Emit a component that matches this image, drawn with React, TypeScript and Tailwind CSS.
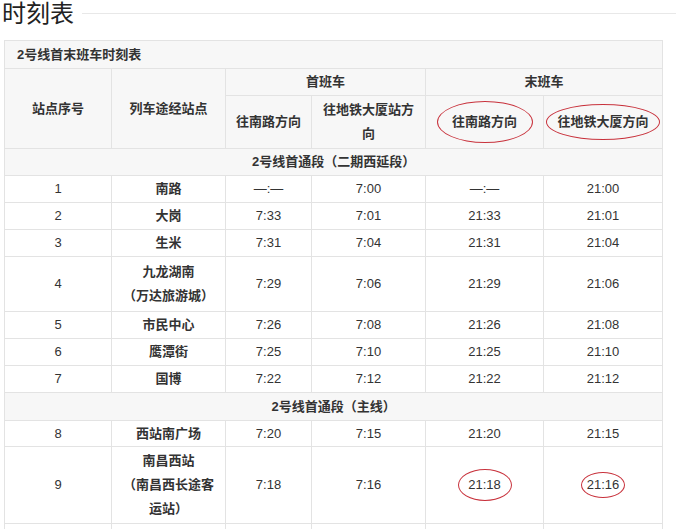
import React from "react";

const B = "border border-[#e3e3e3]";
const rows1 = [
  ["1", "南路", "—:—", "7:00", "—:—", "21:00"],
  ["2", "大岗", "7:33", "7:01", "21:33", "21:01"],
  ["3", "生米", "7:31", "7:04", "21:31", "21:04"],
  ["4", "九龙湖南\n（万达旅游城）", "7:29", "7:06", "21:29", "21:06"],
  ["5", "市民中心", "7:26", "7:08", "21:26", "21:08"],
  ["6", "鹰潭街", "7:25", "7:10", "21:25", "21:10"],
  ["7", "国博", "7:22", "7:12", "21:22", "21:12"],
];

function Ell({ w, h }: { w: number; h: number }) {
  return (
    <span
      className="absolute left-1/2 top-1/2 -translate-x-1/2 -translate-y-1/2 rounded-[50%] border border-[#c8323c]"
      style={{ width: w, height: h }}
    />
  );
}

function Row({ r, h = 27 }: { r: string[]; h?: number }) {
  return (
    <tr style={{ height: h }}>
      <td className={B}>{r[0]}</td>
      <td className={`${B} font-bold whitespace-pre-line leading-[24px] px-2`}>{r[1]}</td>
      <td className={B}>{r[2]}</td>
      <td className={B}>{r[3]}</td>
      <td className={B}>{r[4]}</td>
      <td className={B}>{r[5]}</td>
    </tr>
  );
}

export default function App() {
  return (
    <div className="bg-white w-[676px] h-[529px] overflow-hidden text-[#333] text-[13px]" style={{ fontFamily: '"Liberation Sans", "Noto Sans CJK SC", sans-serif' }}>
      <div className="flex items-center h-[28px]">
        <div className="text-[24px] leading-[28px] text-[#222] pl-[2px]">时刻表</div>
        <div className="flex-1 h-px bg-[#e8e8e8] ml-2 -mt-[2px]" />
      </div>
      <table className="ml-[4px] mt-[12px] border-collapse text-center table-fixed" style={{ width: 658 }}>
        <colgroup>
          <col style={{ width: 107 }} />
          <col style={{ width: 114 }} />
          <col style={{ width: 86 }} />
          <col style={{ width: 114 }} />
          <col style={{ width: 118 }} />
          <col style={{ width: 119 }} />
        </colgroup>
        <tbody>
          <tr className="h-[28px] bg-[#f7f7f7]">
            <td colSpan={6} className={`${B} text-left px-3 font-bold`}>2号线首末班车时刻表</td>
          </tr>
          <tr className="h-[27px] bg-[#f7f7f7] font-bold">
            <td rowSpan={2} className={B}>站点序号</td>
            <td rowSpan={2} className={B}>列车途经站点</td>
            <td colSpan={2} className={B}>首班车</td>
            <td colSpan={2} className={B}>末班车</td>
          </tr>
          <tr className="h-[53px] bg-[#f7f7f7] font-bold leading-[24px]">
            <td className={B}>往南路方向</td>
            <td className={`${B} px-2`}>往地铁大厦站方向</td>
            <td className={`${B} relative`}>往南路方向<Ell w={96} h={42} /></td>
            <td className={`${B} relative`}>往地铁大厦方向<Ell w={114} h={36} /></td>
          </tr>
          <tr className="h-[27px] bg-[#f7f7f7]">
            <td colSpan={6} className={`${B} font-bold`}>2号线首通段（二期西延段）</td>
          </tr>
          {rows1.map((r) => <Row key={r[0]} r={r} h={r[0] === "4" ? 55 : 27} />)}
          <tr className="h-[28px] bg-[#f7f7f7]">
            <td colSpan={6} className={`${B} font-bold`}>2号线首通段（主线）</td>
          </tr>
          <Row r={["8", "西站南广场", "7:20", "7:15", "21:20", "21:15"]} h={26} />
          <tr style={{ height: 77 }}>
            <td className={B}>9</td>
            <td className={`${B} font-bold leading-[24px] px-2`}>南昌西站<br />（南昌西长途客运站）</td>
            <td className={B}>7:18</td>
            <td className={B}>7:16</td>
            <td className={`${B} relative`}>21:18<Ell w={54} h={32} /></td>
            <td className={`${B} relative`}>21:16<Ell w={44} h={26} /></td>
          </tr>
          <tr style={{ height: 27 }}>
            <td className={B}></td><td className={B}></td><td className={B}></td><td className={B}></td><td className={B}></td><td className={B}></td>
          </tr>
        </tbody>
      </table>
    </div>
  );
}
